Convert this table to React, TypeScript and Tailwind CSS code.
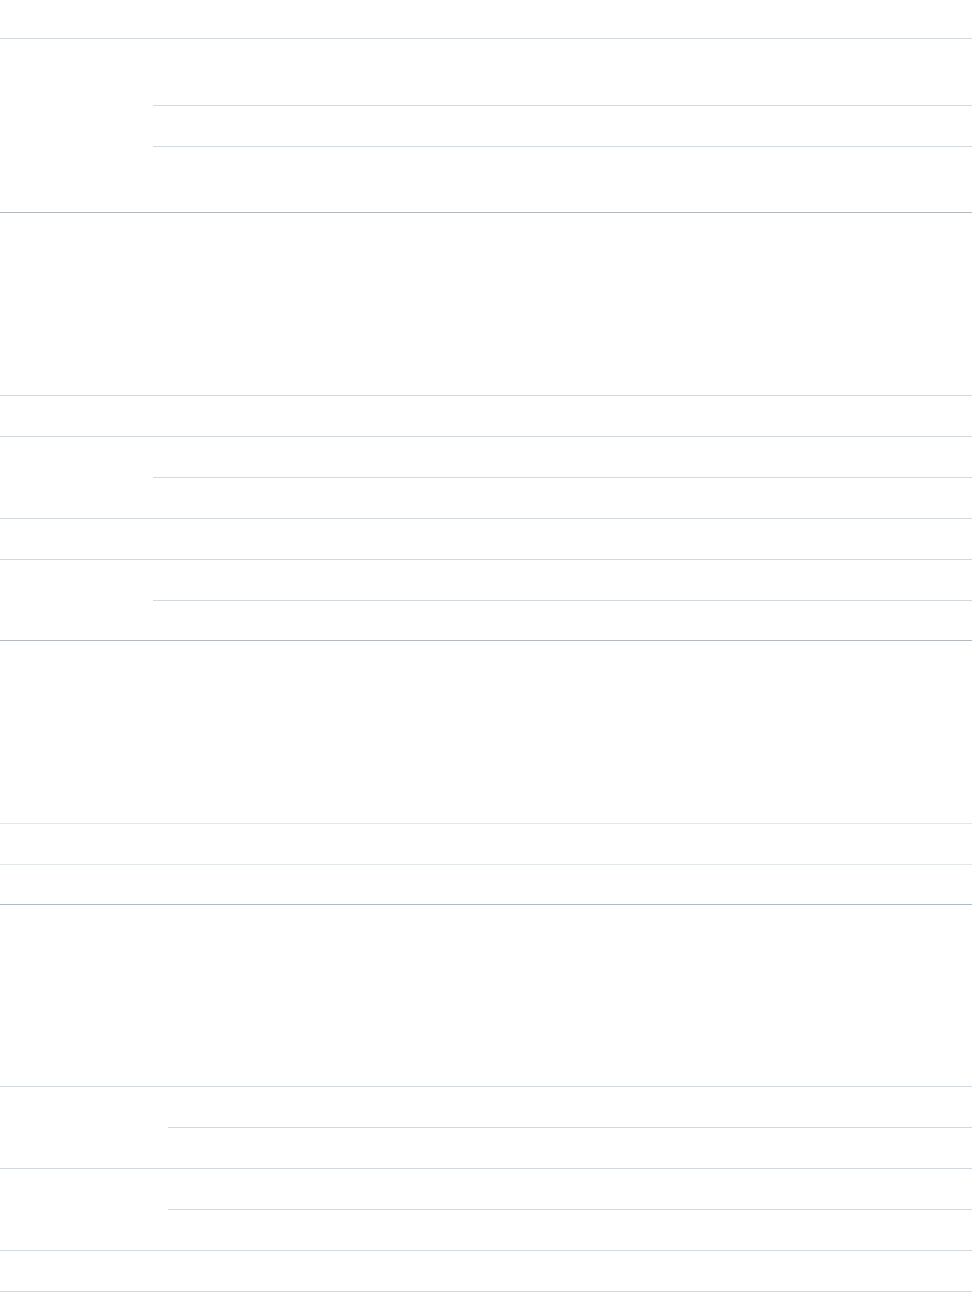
import React from 'react';

type Row = {
  h: string;
  indent?: 'sm' | 'lg';
  tone: 'light' | 'dark' | 'faint' | 'blue';
};

const rows: Row[] = [
  { h: 'h-[39px]', tone: 'light' },
  { h: 'h-[67px]', tone: 'light', indent: 'sm' },
  { h: 'h-[41px]', tone: 'light', indent: 'sm' },
  { h: 'h-[66px]', tone: 'dark' },
  { h: 'h-[183px]', tone: 'light' },
  { h: 'h-[41px]', tone: 'light' },
  { h: 'h-[41px]', tone: 'light', indent: 'sm' },
  { h: 'h-[41px]', tone: 'light' },
  { h: 'h-[41px]', tone: 'light' },
  { h: 'h-[41px]', tone: 'light', indent: 'sm' },
  { h: 'h-[40px]', tone: 'dark' },
  { h: 'h-[183px]', tone: 'faint' },
  { h: 'h-[41px]', tone: 'faint' },
  { h: 'h-[40px]', tone: 'blue' },
  { h: 'h-[182px]', tone: 'light' },
  { h: 'h-[41px]', tone: 'light', indent: 'lg' },
  { h: 'h-[41px]', tone: 'light' },
  { h: 'h-[41px]', tone: 'light', indent: 'lg' },
  { h: 'h-[41px]', tone: 'light' },
  { h: 'h-[41px]', tone: 'light' },
];

const borderFor = (tone: Row['tone']) => {
  switch (tone) {
    case 'dark':
      return 'border-b border-[#b3babf]';
    case 'faint':
      return 'border-b border-[#e2e7ea]';
    case 'blue':
      return 'border-b border-[#adbccb]';
    default:
      return 'border-b border-[#d3dadf]';
  }
};

const App: React.FC = () => {
  return (
    <div className="min-h-screen bg-white font-['Liberation_Sans',sans-serif]">
      <div className="w-[972px] flex flex-col">
        {rows.map((row, i) => (
          <div key={i} className={`${row.h} flex`}>
            {row.indent === 'sm' && <div className="w-[153px] shrink-0" />}
            {row.indent === 'lg' && <div className="w-[168px] shrink-0" />}
            <div className={`flex-1 ${borderFor(row.tone)}`} />
          </div>
        ))}
      </div>
    </div>
  );
};

export default App;
